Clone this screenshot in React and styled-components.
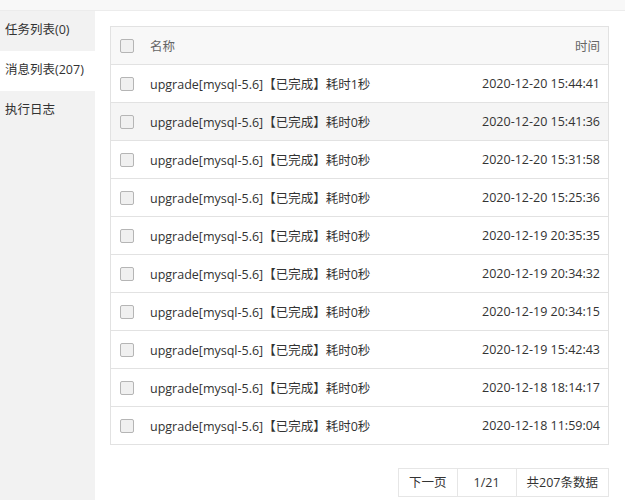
import React from "react";
import styled, { createGlobalStyle } from "styled-components";

const G = createGlobalStyle`
  body{margin:0;font-family:"Open Sans","Noto Sans CJK SC",sans-serif;font-size:13px;color:#333;background:#fff;}
`;
const Page = styled.div`width:625px;height:500px;display:flex;flex-direction:column;overflow:hidden;`;
const Top = styled.div`height:10px;background:#f8f8f8;border-bottom:1px solid #ececec;flex:none;`;
const Body = styled.div`flex:1;display:flex;`;
const Side = styled.div`width:95px;background:#f2f2f2;display:flex;flex-direction:column;flex:none;`;
const Tab = styled.div`height:40px;line-height:38px;padding-left:5px;font-size:12.5px;color:#333;background:${p=>p.$active?"#fff":"transparent"};`;
const Main = styled.div`flex:1;padding:15px 16px 0 15px;`;
const Table = styled.div`border:1px solid #e2e2e2;`;
const Row = styled.div`height:37px;display:flex;align-items:center;padding:0 8px 0 8px;border-top:${p=>p.$first?"none":"1px solid #e2e2e2"};background:${p=>p.$bg||"#fff"};color:${p=>p.$head?"#666":"#333"};`;
const Box = styled.span`width:12px;height:12px;border:1px solid #b5b5b5;border-radius:2px;background:#f0f0f0;flex:none;margin-right:16px;margin-left:1px;`;
const Name = styled.span`flex:1;font-size:12.5px;`;
const Time = styled.span`font-size:12.5px;`;
const Pager = styled.div`display:flex;justify-content:flex-end;margin-top:23px;`;
const PBtn = styled.div`height:27px;line-height:27px;padding:0 ${p=>p.$pad}px;border:1px solid #e6e6e6;margin-left:-1px;font-size:12.5px;color:#333;`;

const times=["2020-12-20 15:44:41","2020-12-20 15:41:36","2020-12-20 15:31:58","2020-12-20 15:25:36","2020-12-19 20:35:35","2020-12-19 20:34:32","2020-12-19 20:34:15","2020-12-19 15:42:43","2020-12-18 18:14:17","2020-12-18 11:59:04"];

export default function App(){
  return <Page><G/><Top/><Body>
    <Side><Tab>任务列表(0)</Tab><Tab $active>消息列表(207)</Tab><Tab>执行日志</Tab></Side>
    <Main>
      <Table>
        <Row $first $head $bg="#f8f8f8"><Box/><Name>名称</Name><Time>时间</Time></Row>
        {times.map((t,i)=><Row key={i} $bg={i===1?"#f5f5f5":"#fff"}><Box/><Name>upgrade[mysql-5.6]【已完成】耗时{i===0?1:0}秒</Name><Time>{t}</Time></Row>)}
      </Table>
      <Pager><PBtn $pad={10}>下一页</PBtn><PBtn $pad={16}>1/21</PBtn><PBtn $pad={10}>共207条数据</PBtn></Pager>
    </Main>
  </Body></Page>;
}
